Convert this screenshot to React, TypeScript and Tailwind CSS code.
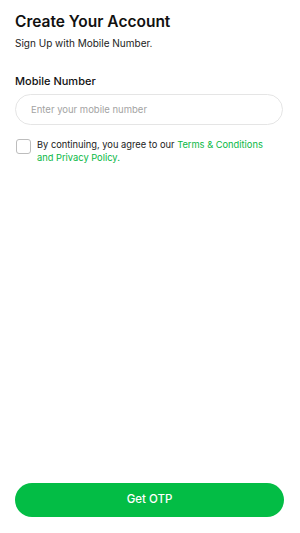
import React, { useState } from 'react';

const App: React.FC = () => {
  const [phone, setPhone] = useState('');
  const [agreed, setAgreed] = useState(false);

  return (
    <div
      className="h-screen bg-white flex flex-col px-[15px] pt-[12px] pb-[16px] text-[#111]"
      style={{ fontFamily: 'Inter, "Noto Sans", sans-serif' }}
    >
      <h1 className="text-[15.5px] font-semibold leading-[20px]">Create Your Account</h1>
      <p className="text-[10px] text-[#222] mt-[4px] leading-[14px]">Sign Up with Mobile Number.</p>

      <label className="text-[11px] font-medium mt-[24px] leading-[14px]">Mobile Number</label>
      <input
        type="tel"
        value={phone}
        onChange={(e) => setPhone(e.target.value)}
        placeholder="Enter your mobile number"
        className="mt-[6px] w-[268px] h-[31px] rounded-full border border-[#e5e5e5] px-[15px] text-[9.5px] placeholder:text-[#a3a3a3] focus:outline-none"
      />

      <div className="flex items-start gap-[6px] mt-[13px]">
        <button
          onClick={() => setAgreed(!agreed)}
          className="w-[15px] h-[15px] shrink-0 mt-[1px] ml-[1px] rounded-[3px] border border-[#bdbdbd] bg-white"
        />
        <p className="w-[228px] text-[9.3px] leading-[13px] text-[#222]">
          By continuing, you agree to our{' '}
          <span className="text-[#09b845]">Terms &amp; Conditions and Privacy Policy.</span>
        </p>
      </div>

      <div className="flex-1" />

      <button className="w-[269px] h-[34px] rounded-full bg-[#03bd45] text-white text-[11.5px] font-medium">
        Get OTP
      </button>
    </div>
  );
};

export default App;
